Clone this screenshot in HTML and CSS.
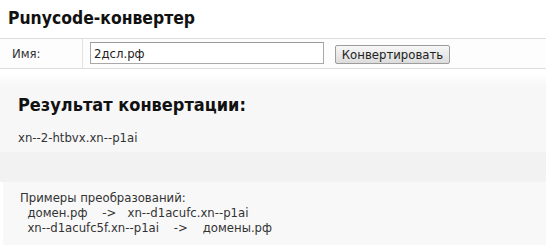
FILE: index.html
```html
<!DOCTYPE html>
<html lang="ru">
<head>
<meta charset="utf-8">
<title>Punycode-конвертер</title>
<link rel="stylesheet" href="styles.css">
</head>
<body>
<h1 class="title">Punycode-конвертер</h1>
<form class="form-row">
  <label class="label-cell" for="name">Имя:</label>
  <div class="field-cell">
    <input class="name-input" id="name" type="text" value="2дсл.рф">
    <button class="convert-btn" type="button">Конвертировать</button>
  </div>
</form>
<section class="result">
  <h2 class="result-title">Результат конвертации:</h2>
  <div class="result-value">xn--2-htbvx.xn--p1ai</div>
</section>
<div class="band"></div>
<section class="examples">
<pre class="examples-text">Примеры преобразований:
  домен.рф    ->   xn--d1acufc.xn--p1ai
  xn--d1acufc5f.xn--p1ai    ->    домены.рф</pre>
</section>
</body>
</html>
```
FILE: styles.css
```css
html, body {
  margin: 0;
  padding: 0;
  background: #ffffff;
}
body {
  font-family: "DejaVu Sans Condensed", "DejaVu Sans", sans-serif;
  font-stretch: semi-condensed;
  font-size: 13px;
  color: #333333;
}
.title {
  margin: 0;
  padding: 7px 0 0 8px;
  height: 38px;
  box-sizing: border-box;
  font-size: 17.4px;
  line-height: 22px;
  font-weight: bold;
  color: #111111;
}
.form-row {
  display: flex;
  margin: 0;
  height: 31px;
  box-sizing: border-box;
  border-top: 1px solid #dddddd;
  border-bottom: 1px solid #dddddd;
  background: #fdfdfd;
}
.label-cell {
  width: 83px;
  box-sizing: border-box;
  border-right: 1px solid #e3e3e3;
  padding-left: 12px;
  display: flex;
  align-items: center;
  color: #333333;
}
.field-cell {
  display: flex;
  align-items: flex-end;
  padding: 0 0 4px 7px;
  gap: 11px;
}
.name-input {
  width: 234px;
  height: 22px;
  box-sizing: border-box;
  border: 1px solid #a9a9a9;
  border-top-color: #9a9a9a;
  padding: 0 3px;
  font: inherit;
  color: #222222;
  background: #ffffff;
}
.convert-btn {
  width: 115px;
  height: 19px;
  box-sizing: border-box;
  border: 1px solid #9d9d9d;
  border-radius: 2px;
  padding: 0;
  background: linear-gradient(#f7f7f7, #dcdcdc);
  font: inherit;
  line-height: 16px;
  color: #222222;
}
.result {
  margin-top: 0;
  height: 83px;
  box-sizing: border-box;
  padding: 24px 18px 0;
  background: linear-gradient(#ffffff 0, #ffffff 4px, #f8f7f8 18px, #f8f7f8 100%);
}
.result-title {
  margin: 0;
  font-size: 18px;
  font-weight: bold;
  color: #111111;
  line-height: 24px;
}
.result-value {
  margin-top: 13px;
  line-height: 15px;
}
.band {
  height: 30px;
  background: #f2f2f2;
}
.examples {
  height: 63px;
  margin-left: 3px;
  box-sizing: border-box;
  padding: 8px 0 0 17px;
  background: #f9f8f9;
}
.examples-text {
  margin: 0;
  font: inherit;
  line-height: 15px;
  color: #333333;
}
```
